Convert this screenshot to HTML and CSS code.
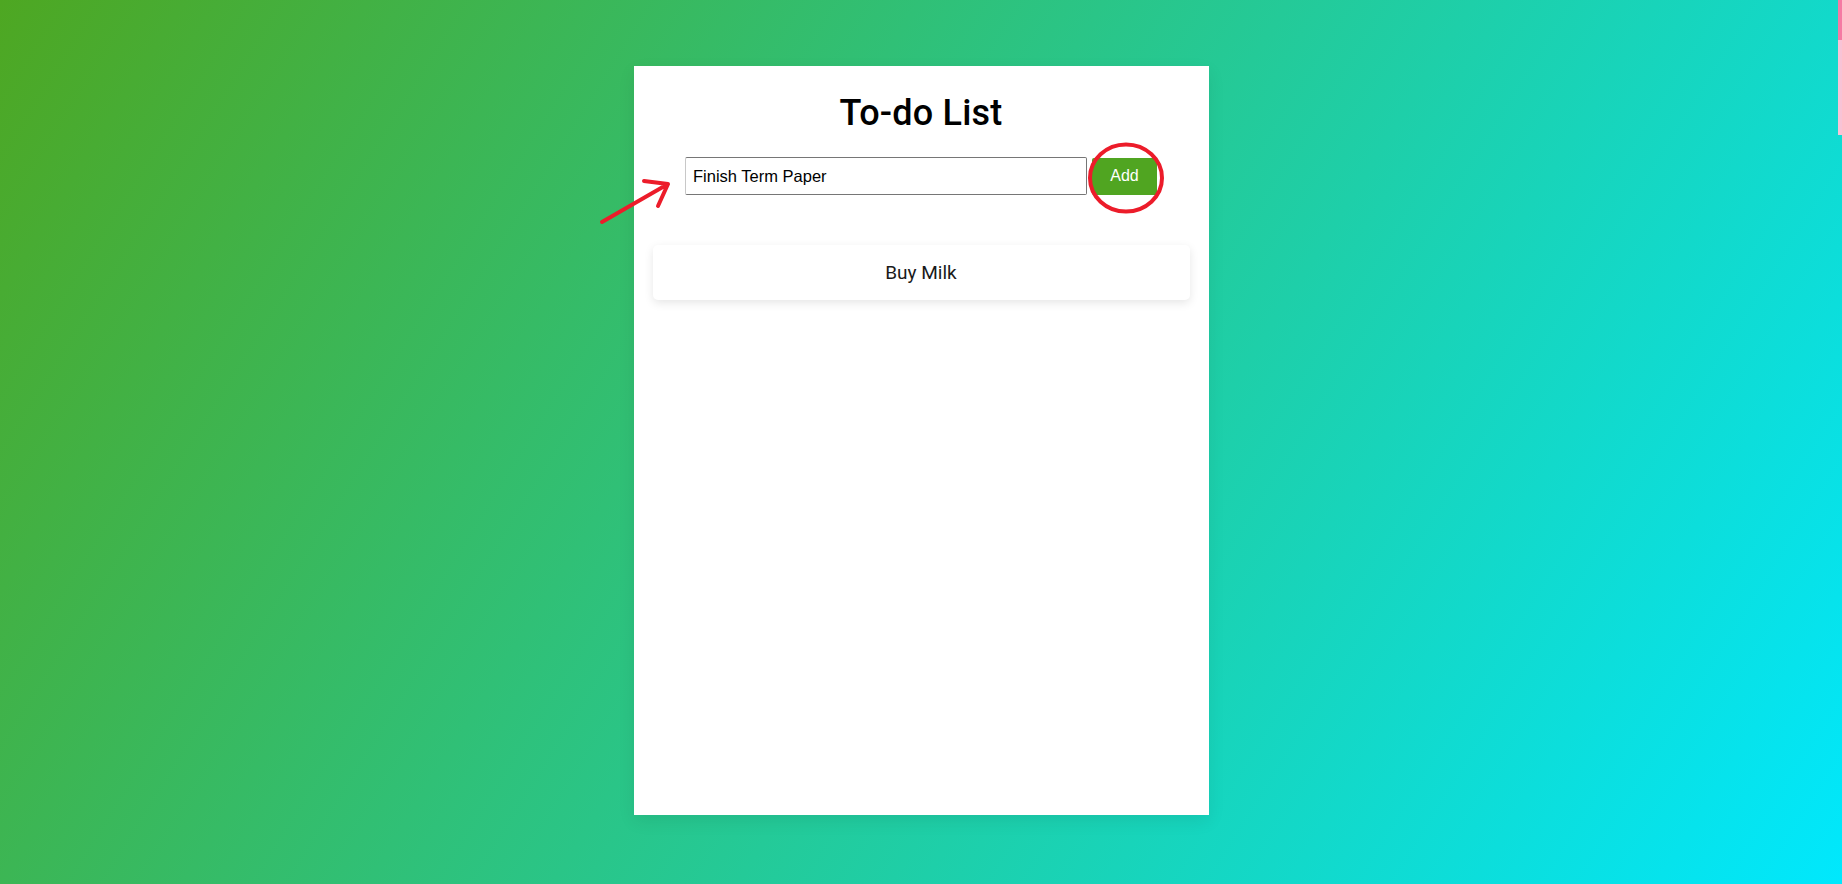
FILE: index.html
```html
<!DOCTYPE html>
<html lang="en">
<head>
<meta charset="utf-8">
<title>To-do List</title>
<link rel="stylesheet" href="styles.css">
</head>
<body>
<main class="card">
  <h1 class="title">To-do List</h1>
  <div class="entry">
    <input class="entry-input" type="text" value="Finish Term Paper">
    <button class="entry-btn">Add</button>
    <svg class="mark-circle" width="80" height="74" viewBox="0 0 80 74"><ellipse cx="40" cy="37" rx="36" ry="33.5" fill="none" stroke="#ec1c2a" stroke-width="4"/></svg>
  </div>
  <ul class="items">
    <li class="item">Buy Milk</li>
  </ul>
</main>
<svg class="mark-arrow" width="80" height="50" viewBox="0 0 80 50"><path d="M4 44 L70 6 M46 3 L70 6 L60 28" fill="none" stroke="#ec1c2a" stroke-width="4" stroke-linecap="round" stroke-linejoin="round"/></svg>
<div class="edge"><div class="edge-top"></div><div class="edge-low"></div></div>
</body>
</html>
```
FILE: styles.css
```css
html, body {
  margin: 0;
  padding: 0;
  height: 100%;
}
body {
  background: linear-gradient(122deg, #4ea722 0%, #00e8fd 100%);
  font-family: Roboto, "Liberation Sans", sans-serif;
  padding-top: 66px;
  box-sizing: border-box;
  position: relative;
  overflow: hidden;
}
.card {
  width: 575px;
  height: 749px;
  margin: 0 auto;
  background: #fff;
  box-shadow: 0 6px 16px rgba(0,0,0,0.08);
  box-sizing: border-box;
  padding: 26px 19px 0;
  display: flex;
  flex-direction: column;
  align-items: center;
}
.title {
  margin: 0;
  font-family: Roboto, sans-serif;
  font-weight: 500;
  font-size: 36px;
  line-height: 43px;
  color: #000;
  letter-spacing: 0.2px;
}
.entry {
  margin-top: 22px;
  display: flex;
  align-items: center;
  gap: 5px;
  position: relative;
}
.entry-input {
  width: 402px;
  height: 38px;
  box-sizing: border-box;
  border: 1px solid #767676;
  border-left-color: #c8c8c8;
  border-radius: 2px;
  padding: 0 7px;
  font-family: "Liberation Sans", Arial, sans-serif;
  font-size: 16.5px;
  color: #000;
  outline: none;
}
.entry-btn {
  width: 65px;
  height: 37px;
  border: none;
  border-radius: 2px;
  background: #50a521;
  color: #fff;
  font-family: "Liberation Sans", Arial, sans-serif;
  font-size: 16px;
  padding: 0;
}
.mark-circle {
  position: absolute;
  left: 401px;
  top: -16px;
}
.items {
  list-style: none;
  margin: 50px 0 0;
  padding: 0;
  width: 100%;
}
.item {
  height: 55px;
  background: #fff;
  border-radius: 5px;
  box-shadow: 0 3px 10px rgba(0,0,0,0.1);
  display: flex;
  align-items: center;
  justify-content: center;
  font-family: Roboto, sans-serif;
  font-size: 19px;
  color: #1a1a1a;
}
.mark-arrow {
  position: absolute;
  left: 598px;
  top: 178px;
}
.edge {
  position: absolute;
  right: 0;
  top: 0;
  width: 4px;
  height: 135px;
  display: flex;
  flex-direction: column;
}
.edge-top {
  height: 40px;
  background: #f57aa3;
}
.edge-low {
  flex: 1;
  background: #f8c3d6;
}
```
